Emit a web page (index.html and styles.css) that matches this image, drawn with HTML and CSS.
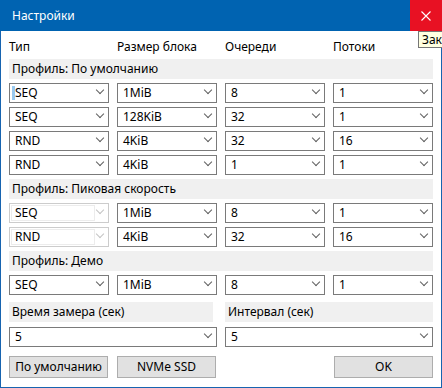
FILE: index.html
```html
<!DOCTYPE html>
<html lang="ru">
<head>
<meta charset="utf-8">
<title>Настройки</title>
<link rel="stylesheet" href="styles.css">
</head>
<body>
<div class="window">
  <div class="titlebar">
    <div class="title">Настройки</div>
    <div class="close">
      <svg width="10" height="10" viewBox="0 0 10 10"><path d="M0.5 0.5 L9.5 9.5 M9.5 0.5 L0.5 9.5" stroke="#fff" stroke-width="1.1" fill="none"/></svg>
    </div>
  </div>
  <div class="tooltip">Закр</div>
  <div class="content">
    <div class="grid4 header">
      <div>Тип</div><div>Размер блока</div><div>Очереди</div><div>Потоки</div>
    </div>

    <div class="bar">Профиль: По умолчанию</div>
    <div class="grid4 row">
      <div class="combo"><span class="caret"></span>SEQ<i class="chev"></i></div>
      <div class="combo">1MiB<i class="chev"></i></div>
      <div class="combo">8<i class="chev"></i></div>
      <div class="combo">1<i class="chev"></i></div>
    </div>
    <div class="grid4 row">
      <div class="combo">SEQ<i class="chev"></i></div>
      <div class="combo">128KiB<i class="chev"></i></div>
      <div class="combo">32<i class="chev"></i></div>
      <div class="combo">1<i class="chev"></i></div>
    </div>
    <div class="grid4 row">
      <div class="combo">RND<i class="chev"></i></div>
      <div class="combo">4KiB<i class="chev"></i></div>
      <div class="combo">32<i class="chev"></i></div>
      <div class="combo">16<i class="chev"></i></div>
    </div>
    <div class="grid4 row">
      <div class="combo">RND<i class="chev"></i></div>
      <div class="combo">4KiB<i class="chev"></i></div>
      <div class="combo">1<i class="chev"></i></div>
      <div class="combo">1<i class="chev"></i></div>
    </div>

    <div class="bar">Профиль: Пиковая скорость</div>
    <div class="grid4 row">
      <div class="combo disabled"><span class="inner">SEQ</span><i class="chev"></i></div>
      <div class="combo">1MiB<i class="chev"></i></div>
      <div class="combo">8<i class="chev"></i></div>
      <div class="combo">1<i class="chev"></i></div>
    </div>
    <div class="grid4 row">
      <div class="combo disabled"><span class="inner">RND</span><i class="chev"></i></div>
      <div class="combo">4KiB<i class="chev"></i></div>
      <div class="combo">32<i class="chev"></i></div>
      <div class="combo">16<i class="chev"></i></div>
    </div>

    <div class="bar">Профиль: Демо</div>
    <div class="grid4 row">
      <div class="combo">SEQ<i class="chev"></i></div>
      <div class="combo">1MiB<i class="chev"></i></div>
      <div class="combo">8<i class="chev"></i></div>
      <div class="combo">1<i class="chev"></i></div>
    </div>

    <div class="grid2 timebars">
      <div class="bar small">Время замера (сек)</div>
      <div class="bar">Интервал (сек)</div>
    </div>
    <div class="grid2 timecombos">
      <div class="combo">5<i class="chev"></i></div>
      <div class="combo">5<i class="chev"></i></div>
    </div>

    <div class="grid4 buttons">
      <button class="btn">По умолчанию</button>
      <button class="btn">NVMe SSD</button>
      <div></div>
      <button class="btn ok">OK</button>
    </div>
  </div>
</div>
</body>
</html>
```
FILE: styles.css
```css
html, body {
  margin: 0;
  padding: 0;
  width: 442px;
  height: 388px;
  overflow: hidden;
  background: #ffffff;
  font-family: "Noto Sans", "Open Sans", sans-serif;
  font-size: 12px;
  color: #000;
}

.window {
  position: relative;
  box-sizing: border-box;
  width: 442px;
  height: 388px;
  border: 1px solid #1764b0;
  border-top: none;
  background: #fff;
}

.titlebar {
  height: 31px;
  margin: 0 -1px;
  background: #0063b1;
  display: flex;
  align-items: center;
  justify-content: space-between;
}

.title {
  color: #fff;
  padding-left: 12px;
  font-size: 12px;
  line-height: 16px;
}

.close {
  width: 32px;
  height: 31px;
  background: #e81123;
  display: flex;
  align-items: center;
  justify-content: center;
}

.tooltip {
  position: absolute;
  left: 417px;
  top: 31px;
  width: 40px;
  height: 15px;
  padding: 0 3px;
  border: 1px solid #767676;
  background: #ffffe1;
  line-height: 15px;
  white-space: nowrap;
  font-size: 12px;
}

.content {
  padding: 0 8px;
}

.grid4 {
  display: grid;
  grid-template-columns: repeat(4, 100px);
  column-gap: 8px;
}

.grid2 {
  display: grid;
  grid-template-columns: 208px 208px;
  column-gap: 8px;
}

.header {
  height: 28px;
  align-items: end;
  line-height: 16px;
  padding-bottom: 4px;
  box-sizing: border-box;
}

.bar {
  height: 20px;
  background: #f0f0f0;
  line-height: 20px;
  padding-left: 3px;
  white-space: nowrap;
}

.bar.small {
  width: 201px;
}

.row {
  margin-top: 4px;
}

.row + .bar {
  margin-top: 4px;
}

.combo {
  position: relative;
  box-sizing: border-box;
  height: 20px;
  border: 1px solid #7a7a7a;
  background: #fff;
  line-height: 18px;
  padding-left: 5px;
  white-space: nowrap;
}

.chev {
  position: absolute;
  right: 4px;
  top: 6px;
  width: 8px;
  height: 5px;
}

.chev::before {
  content: "";
  position: absolute;
  left: 1px;
  top: -3px;
  width: 5px;
  height: 5px;
  border-right: 1px solid #606060;
  border-bottom: 1px solid #606060;
  transform: rotate(45deg);
}

.caret {
  position: absolute;
  left: 2px;
  top: 2px;
  width: 3px;
  height: 14px;
  background: #99c9ef;
}

.combo.disabled {
  border-color: #cccccc;
  padding: 1px;
  line-height: 16px;
}

.combo.disabled .inner {
  display: block;
  box-sizing: border-box;
  width: 84px;
  height: 16px;
  border: 1px solid #ececec;
  padding-left: 3px;
  line-height: 14px;
}

.combo.disabled .chev::before {
  border-color: #c4c4c4;
}

.timebars {
  margin-top: 7px;
}

.timecombos {
  margin-top: 5px;
}

.buttons {
  margin-top: 9px;
}

.btn {
  box-sizing: border-box;
  height: 22px;
  width: 99px;
  margin: 0;
  padding: 0;
  border: 1px solid #adadad;
  background: #e1e1e1;
  font-family: "Noto Sans", "Open Sans", sans-serif;
  font-size: 12px;
  color: #000;
  line-height: 18px;
}

.btn.ok {
  margin-left: 1px;
}
```
